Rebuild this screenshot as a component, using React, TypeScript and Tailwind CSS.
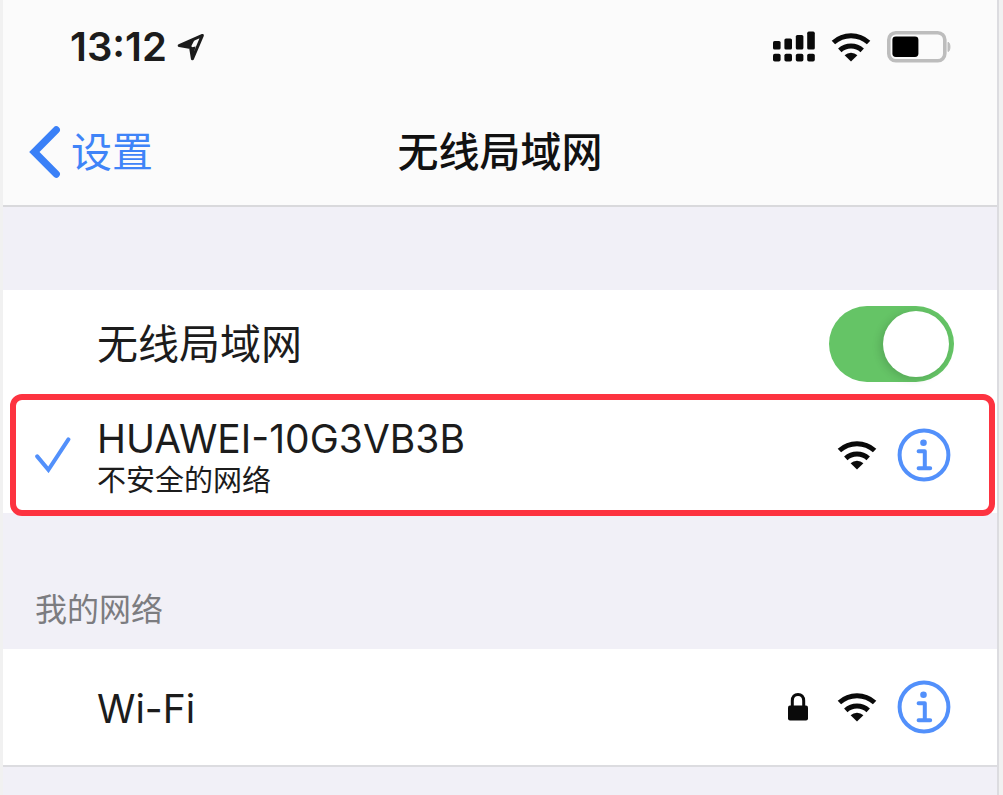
import { useState } from "react";

const WifiIcon = () => (
  <svg className="h-[30px] w-10" viewBox="0 0 40 30" fill="none" stroke="#0a0a0a" strokeWidth="5">
    <path d="M2.4 10.5a26 26 0 0 1 35.2 0" />
    <path d="M8.8 18.4a16.4 16.4 0 0 1 22.4 0" />
    <path d="M20 29.6l-6.4-6.4a9.4 9.4 0 0 1 12.8 0z" fill="#0a0a0a" stroke="none" />
  </svg>
);

const InfoIcon = () => (
  <svg className="h-[54px] w-[54px]" viewBox="0 0 54 54" fill="none" stroke="#5290fb" strokeWidth="4">
    <circle cx="27" cy="27" r="24.4" />
    <circle cx="26.5" cy="14.8" r="3.3" fill="#5290fb" stroke="none" />
    <path d="M21.6 23.3h6.2v17M21.6 40.3h11.6" strokeLinecap="round" strokeLinejoin="round" />
  </svg>
);

const LockIcon = () => (
  <svg className="h-[30px] w-[22px]" viewBox="0 0 22 30" fill="none">
    <path d="M5.3 15V8.8C5.3 4.8 7.6 2.4 11 2.4s5.7 2.4 5.7 6.4V15" stroke="#0a0a0a" strokeWidth="3" />
    <rect x="1" y="13.4" width="20" height="15.2" rx="2" fill="#0a0a0a" />
  </svg>
);

const SignalIcon = () => (
  <svg className="h-8 w-[42px]" viewBox="0 0 42 32" fill="#0a0a0a">
    <rect x="0" y="10" width="7.6" height="8.6" rx="1.6" />
    <rect x="11.4" y="7.4" width="7.6" height="11.2" rx="1.6" />
    <rect x="22.8" y="4" width="7.6" height="14.6" rx="1.6" />
    <rect x="34.2" y="0.6" width="7.6" height="18" rx="1.6" />
    <rect x="0" y="22.8" width="7.6" height="7.8" rx="1.8" />
    <rect x="11.4" y="22.8" width="7.6" height="7.8" rx="1.8" />
    <rect x="22.8" y="22.8" width="7.6" height="7.8" rx="1.8" />
    <rect x="34.2" y="22.8" width="7.6" height="7.8" rx="1.8" />
  </svg>
);

const BatteryIcon = () => (
  <svg className="h-8 w-16" viewBox="0 0 64 32" fill="none">
    <rect x="1.8" y="1.8" width="56" height="28" rx="7" stroke="#bdbdbd" strokeWidth="3.6" />
    <rect x="5.4" y="5.4" width="26" height="20.6" rx="3.4" fill="#000" />
    <path d="M61 11.2c2.6.8 2.6 8.6 0 9.4z" fill="#bdbdbd" stroke="#bdbdbd" />
  </svg>
);

const StatusBar = () => (
  <div className="flex h-[94px] items-center justify-between pl-[67px] pr-[46px]">
    <div className="flex items-center gap-2.5">
      <time className="text-[40px] leading-[48px] font-semibold text-[#1c1c1c]">13:12</time>
      <svg className="h-7 w-7" viewBox="0 0 28 28" fill="none">
        <path
          d="M25.4 2.4L2.2 12.6l11.4 1.8L15.4 25.8z"
          stroke="#1c1c1c"
          strokeWidth="3"
          strokeLinejoin="round"
        />
        <path d="M2.2 12.6l11.4 1.8 4-7.6z M15.4 25.8l-1.8-11.4 5-1z" fill="#1c1c1c" />
      </svg>
    </div>
    <div className="flex items-center gap-4">
      <SignalIcon />
      <WifiIcon />
      <BatteryIcon />
    </div>
  </div>
);

const NavBar = () => (
  <div className="grid h-[111px] grid-cols-[1fr_auto_1fr] items-center pt-1 pl-[26px] pr-[26px]">
    <a href="#settings" className="flex items-center gap-2.5 text-[41px] leading-[54px] text-[#3f84f8]">
      <svg className="h-[54px] w-8" viewBox="0 0 32 54" fill="none">
        <path d="M27.2 5L5.4 27l21.8 22" stroke="#3a80f7" strokeWidth="7.4" strokeLinecap="round" />
      </svg>
      设置
    </a>
    <h1 className="text-[41px] leading-[54px] font-medium text-[#111]">无线局域网</h1>
  </div>
);

type NetworkRowProps = {
  name: string;
  note?: string;
  connected?: boolean;
  locked?: boolean;
  highlighted?: boolean;
};

const NetworkRow = ({ name, note, connected, locked, highlighted }: NetworkRowProps) => (
  <li className="relative flex h-[116px] items-center pl-8 pr-[46px]">
    <div className="w-[62px]">
      {connected && (
        <svg className="h-9 w-9" viewBox="0 0 36 36" fill="none">
          <path d="M2.2 19.4l11.2 13.4L33.4 2.4" stroke="#5290fb" strokeWidth="4" strokeLinecap="round" />
        </svg>
      )}
    </div>
    <div className="flex-1 pt-1">
      <p className="text-[39px] leading-[48px]">{name}</p>
      {note && <p className="text-[29px] leading-[36px]">{note}</p>}
    </div>
    <div className="flex items-center gap-7">
      {locked && <LockIcon />}
      <WifiIcon />
    </div>
    <button type="button" aria-label={name} className="ml-5">
      <InfoIcon />
    </button>
    {highlighted && (
      <div className="pointer-events-none absolute -inset-y-[3px] left-[7px] right-[2px] rounded-xl border-[6px] border-[#fd3340]" />
    )}
  </li>
);

const App = () => {
  const [enabled, setEnabled] = useState(true);

  return (
    <div className="min-h-screen bg-[#f1f1f1] pl-[3px] pr-1 font-[Inter,'Noto_Sans_CJK_SC',sans-serif] text-[#1c1c1c]">
      <main className="min-h-screen border-r-2 border-[#dcdce0] bg-[#f1f0f7]">
        <header className="border-b-2 border-[#d9d9dc] bg-[#fbfbfb]">
          <StatusBar />
          <NavBar />
        </header>

        <section className="mt-[83px] bg-white">
          <label className="flex h-[107px] items-center justify-between pl-[94px] pr-[43px] text-[41px] leading-[54px]">
            无线局域网
            <input
              type="checkbox"
              role="switch"
              checked={enabled}
              onChange={(e) => setEnabled(e.target.checked)}
              className="h-19 w-[125px] appearance-none rounded-full bg-[#d9d9dc] p-[5px] before:block before:size-[66px] before:rounded-full before:bg-white before:shadow-[-3px_2px_9px_rgba(0,0,0,0.14)] checked:bg-[#65c466] checked:before:translate-x-[49px]"
            />
          </label>
          <ul>
            <NetworkRow name="HUAWEI-10G3VB3B" note="不安全的网络" connected highlighted />
          </ul>
        </section>

        <section>
          <h2 className="pt-[73px] pb-[15px] pl-8 text-[32px] leading-[48px] text-[#7c7c80]">我的网络</h2>
          <ul className="border-b-2 border-[#dcdce0] bg-white">
            <NetworkRow name="Wi-Fi" locked />
          </ul>
        </section>
      </main>
    </div>
  );
};

export default App;
